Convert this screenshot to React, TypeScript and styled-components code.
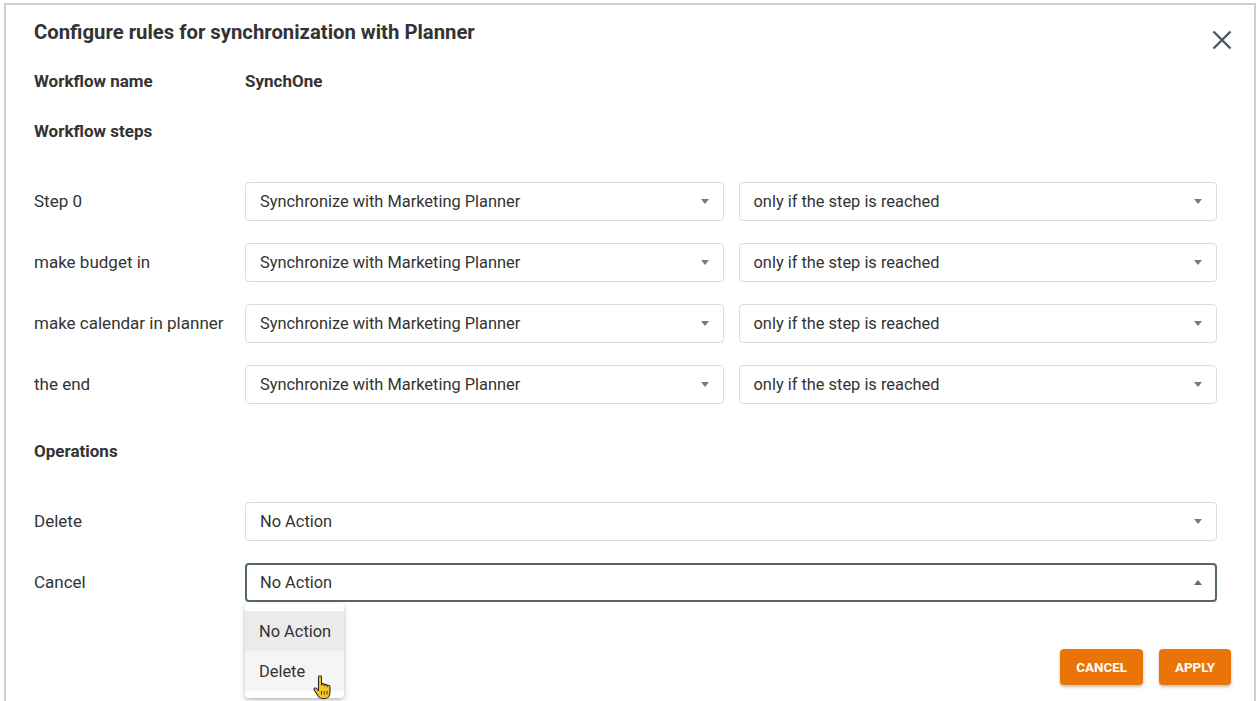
import React from 'react';
import styled, { createGlobalStyle, css } from 'styled-components';

const GlobalStyle = createGlobalStyle`
  html, body {
    margin: 0;
    padding: 0;
    background: #ffffff;
    overflow: hidden;
  }
  body {
    font-family: Roboto, 'Liberation Sans', Arial, sans-serif;
    color: #333333;
  }
  * {
    box-sizing: border-box;
  }
`;

const Page = styled.div`
  width: 1259px;
  height: 701px;
  padding: 3px 3px 0 4px;
`;

const Dialog = styled.section`
  height: 720px;
  border: 2px solid #cfcfcf;
  border-bottom: none;
  background: #ffffff;
`;

const Header = styled.header`
  display: flex;
  justify-content: space-between;
  align-items: flex-start;
  padding: 15px 22px 0 28px;
`;

const Title = styled.h2`
  margin: 0;
  font-size: 20.3px;
  line-height: 24px;
  font-weight: 700;
  color: #333333;
`;

const CloseButton = styled.button`
  margin-top: 10px;
  width: 20px;
  height: 20px;
  padding: 0;
  border: none;
  background: none;
  color: #455a64;
  cursor: pointer;
  display: flex;
`;

const Body = styled.div`
  padding: 21px 37px 0 28px;
`;

const InfoRow = styled.div`
  display: grid;
  grid-template-columns: 211px 1fr;
  font-size: 17px;
  line-height: 20px;
  font-weight: 700;
`;

const SectionTitle = styled.div<{ $top: number }>`
  margin-top: ${(p) => p.$top}px;
  font-size: 17px;
  line-height: 20px;
  font-weight: 700;
`;

const RowList = styled.div<{ $top: number }>`
  margin-top: ${(p) => p.$top}px;
  display: flex;
  flex-direction: column;
  gap: 22px;
`;

const FormRow = styled.div`
  display: grid;
  grid-template-columns: 196px 1fr 1fr;
  column-gap: 15px;
  align-items: center;
`;

const RowLabel = styled.div`
  font-size: 17px;
  line-height: 20px;
  color: #333333;
  margin-top: -2px;
  white-space: nowrap;
`;

const SelectWrap = styled.div<{ $wide?: boolean }>`
  position: relative;
  ${(p) =>
    p.$wide &&
    css`
      grid-column: 2 / span 2;
    `}
`;

const SelectBox = styled.div<{ $focused?: boolean }>`
  height: 39px;
  display: flex;
  align-items: center;
  justify-content: space-between;
  padding: 0 14px;
  border-radius: 4px;
  background: #ffffff;
  font-size: 16.4px;
  color: #333333;
  ${(p) =>
    p.$focused
      ? css`
          border: 2px solid #546771;
          padding: 0 13px;
        `
      : css`
          border: 1px solid #dcdcdc;
        `}
`;

const Caret = styled.span<{ $open?: boolean }>`
  width: 0;
  height: 0;
  border-left: 4.5px solid transparent;
  border-right: 4.5px solid transparent;
  ${(p) =>
    p.$open
      ? css`
          border-bottom: 5px solid #6b6b6b;
        `
      : css`
          border-top: 5px solid #7a7a7a;
        `}
`;

const Menu = styled.ul`
  position: absolute;
  top: calc(100% + 1px);
  left: 0;
  width: 99px;
  margin: 0;
  padding: 8px 0 7px;
  list-style: none;
  background: #ffffff;
  border-radius: 4px;
  box-shadow: 0 3px 6px rgba(0, 0, 0, 0.18), 0 1px 3px rgba(0, 0, 0, 0.12);
  z-index: 2;
`;

const MenuItem = styled.li<{ $state: 'selected' | 'hover' }>`
  height: 40px;
  display: flex;
  align-items: center;
  padding: 0 14px;
  font-size: 16.4px;
  color: #333333;
  white-space: nowrap;
  background: ${(p) => (p.$state === 'selected' ? '#ebebeb' : '#f5f5f5')};
`;

const Pointer = styled.svg`
  position: absolute;
  left: 68px;
  top: 72px;
`;

const Footer = styled.footer`
  display: flex;
  justify-content: flex-end;
  gap: 16px;
  margin-top: 47px;
  padding-right: 23px;
`;

const Button = styled.button`
  height: 36px;
  padding: 0 16px;
  border: none;
  border-radius: 4px;
  background: #ea7408;
  color: #ffffff;
  font-family: Roboto, 'Liberation Sans', Arial, sans-serif;
  font-size: 13.4px;
  font-weight: 700;
  text-transform: uppercase;
  box-shadow: 0 2px 3px rgba(0, 0, 0, 0.25);
  cursor: pointer;
`;

const steps = ['Step 0', 'make budget in', 'make calendar in planner', 'the end'];

const Select = ({ value, focused, open }: { value: string; focused?: boolean; open?: boolean }) => (
  <SelectBox $focused={focused}>
    <span>{value}</span>
    <Caret $open={open} />
  </SelectBox>
);

const HandCursor = () => (
  <Pointer width="20" height="25" viewBox="0 0 20 25">
    <path
      d="M5.5 2.2a1.5 1.5 0 0 1 3 0V10a1.4 1.4 0 0 1 2.8 0v0.8a1.4 1.4 0 0 1 2.8 0v0.8a1.4 1.4 0 0 1 2.8 0V18c0 3-2 5.5-5 5.5H9c-2 0-3-1-4-2.5L1.4 15.3a1.4 1.4 0 0 1 2.2-1.8L5.5 15.6Z"
      fill="#f7c41f"
      stroke="#2b2b2b"
      strokeWidth="1.1"
      strokeLinejoin="round"
    />
    <path d="M8.5 16v3.5M11.3 16v3.5M14.1 16v3.5" stroke="#2b2b2b" strokeWidth="0.9" />
  </Pointer>
);

export default function App() {
  return (
    <>
      <GlobalStyle />
      <Page>
        <Dialog>
          <Header>
            <Title>Configure rules for synchronization with Planner</Title>
            <CloseButton aria-label="Close">
              <svg width="20" height="20" viewBox="0 0 20 20">
                <path d="M1.5 1.5L18.5 18.5M18.5 1.5L1.5 18.5" stroke="currentColor" strokeWidth="2.4" />
              </svg>
            </CloseButton>
          </Header>
          <Body>
            <InfoRow>
              <span>Workflow name</span>
              <span>SynchOne</span>
            </InfoRow>
            <SectionTitle $top={30}>Workflow steps</SectionTitle>
            <RowList $top={41}>
              {steps.map((step) => (
                <FormRow key={step}>
                  <RowLabel>{step}</RowLabel>
                  <SelectWrap>
                    <Select value="Synchronize with Marketing Planner" />
                  </SelectWrap>
                  <SelectWrap>
                    <Select value="only if the step is reached" />
                  </SelectWrap>
                </FormRow>
              ))}
            </RowList>
            <SectionTitle $top={37}>Operations</SectionTitle>
            <RowList $top={41}>
              <FormRow>
                <RowLabel>Delete</RowLabel>
                <SelectWrap $wide>
                  <Select value="No Action" />
                </SelectWrap>
              </FormRow>
              <FormRow>
                <RowLabel>Cancel</RowLabel>
                <SelectWrap $wide>
                  <Select value="No Action" focused open />
                  <Menu>
                    <MenuItem $state="selected">No Action</MenuItem>
                    <MenuItem $state="hover">Delete</MenuItem>
                    <HandCursor />
                  </Menu>
                </SelectWrap>
              </FormRow>
            </RowList>
          </Body>
          <Footer>
            <Button>Cancel</Button>
            <Button>Apply</Button>
          </Footer>
        </Dialog>
      </Page>
    </>
  );
}
